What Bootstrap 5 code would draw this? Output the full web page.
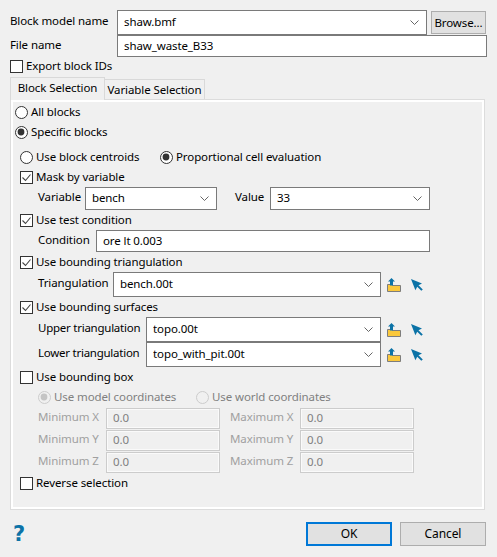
<!DOCTYPE html>
<html lang="en">
<head>
<meta charset="utf-8">
<title>Block selection</title>
<link href="https://cdn.jsdelivr.net/npm/bootstrap@5.3.0/dist/css/bootstrap.min.css" rel="stylesheet">
<style>
html,body{height:557px;overflow:hidden}
body{background:#f0f0f0;color:#000;font:11.5px/16px "Noto Sans","Liberation Sans",sans-serif;letter-spacing:-.1px}
.dlg{height:557px;padding:10px 10px 0 10px;display:flex;flex-direction:column}
.frow{display:flex;align-items:center}
label,.lbl{margin:0;white-space:nowrap;line-height:16px}
.frow>.lbl,.frow>label{padding-bottom:3px}
.form-control,.form-select{font-size:11.5px;letter-spacing:-.1px;line-height:16px;color:#000;background-color:#fff;border:1px solid #7a7a7a;border-radius:0;padding:0 0 2px 6px;box-shadow:none;min-height:0}
.form-select{background-image:url("data:image/svg+xml,%3Csvg xmlns='http://www.w3.org/2000/svg' viewBox='0 0 9 5'%3E%3Cpath d='M.5.5l4 4 4-4' fill='none' stroke='%23555' stroke-width='.9'/%3E%3C/svg%3E");background-size:9px 5px;background-position:right 7px center;background-repeat:no-repeat}
.form-control:disabled{background:#f0f0f0;border:1px solid #ccc;box-shadow:inset 0 0 0 1px #fafafa;color:#808080;opacity:1}
.form-check{margin:0;padding:0;min-height:0;display:flex;align-items:center;height:16px}
.form-check .form-check-input{float:none;margin:0 3px 0 0;width:13px;height:13px;border:1px solid #333;background-color:#fff;border-radius:0;box-shadow:none;flex:none}
.form-check .form-check-input[type=radio]{border-radius:50%;border-color:#333}
.form-check .form-check-input[type=checkbox]:checked{background-color:#fff;border-color:#333;background-size:11px 11px;background-image:url("data:image/svg+xml,%3Csvg xmlns='http://www.w3.org/2000/svg' viewBox='0 0 11 11'%3E%3Cpath d='M1.5 5.500l3 3 5-6' fill='none' stroke='%23444' stroke-width='1.1'/%3E%3C/svg%3E")}
.form-check .form-check-input[type=radio]:checked{background-color:#fff;border-color:#333;background-size:13px 13px;background-image:url("data:image/svg+xml,%3Csvg xmlns='http://www.w3.org/2000/svg' viewBox='0 0 13 13'%3E%3Ccircle cx='6' cy='6' r='3.4' fill='%23333'/%3E%3C/svg%3E")}
.form-check .form-check-input:disabled{opacity:1;border-color:#ccc;background-color:#f0f0f0}
.form-check .form-check-input[type=radio]:disabled:checked{border-color:#ccc;background-color:#f0f0f0;background-image:url("data:image/svg+xml,%3Csvg xmlns='http://www.w3.org/2000/svg' viewBox='0 0 13 13'%3E%3Ccircle cx='6' cy='6' r='3.4' fill='%23c4c4c4'/%3E%3C/svg%3E")}
.form-check-label{opacity:1!important;color:inherit}
.form-check-input:disabled~.form-check-label{color:#808080}
.frow>.off{color:#a0a0a0}
.btn-win{font-size:12px;line-height:16px;letter-spacing:-.1px;color:#000;background:#e1e1e1;border:1px solid #adadad;border-radius:0;padding:0}
.btn-win.dflt{border:2px solid #0078d7}
.top-combo{width:310px;height:25px}
.browse{width:55px;height:23px;margin-left:4px;font-size:11.5px}
.file-in{width:370px;height:22px}
.lb-top{width:107px}
.export{margin-top:1px}
.tabs{border:0;margin-top:3px;height:22px;padding:0;align-items:flex-end;position:relative;z-index:1;flex-wrap:nowrap}
.tabs .nav-link{font-size:11.5px;letter-spacing:-.1px;line-height:16px;color:#000;border-radius:0;margin:0;padding:2px 0 0;border:1px solid #d9d9d9;border-bottom:0;background:#f0f0f0;text-align:center;height:20px;white-space:nowrap}
.tabs .nav-link.active{background:#f0f0f0;color:#000;height:23px;width:95px;border-color:#d9d9d9;padding-top:2px;margin-bottom:-1px}
.tabs .tab2{width:100px;border-left:0}
.pane{width:475px;height:411px;border:1px solid #dcdcdc;box-shadow:inset 0 0 0 2px #fff;padding:2px 0 0 4px}
.ck-s{height:20px}
.indent{padding-left:5px}
.sub{padding-left:18px}
.mt5{margin-top:5px}
.h23{height:23px}
.w-lb-var{width:47px}
.var-sel{width:132px;height:23px}
.val-lb{margin-left:18px;width:35px}
.val-sel{width:160px;height:23px}
.cond-in{width:334px;height:22px}
.w-lb-cond{width:58px}
.w-lb-tri{width:75px}
.w-lb-ul{width:108px;letter-spacing:-.25px}
.tri-sel{width:268px;height:25px}
.ul-sel{width:235px;height:25px}
.ico{display:block;flex:none}
.ico1{margin-left:6px}
.ico2{margin-left:10px}
.nf{width:114px;height:21px}
.nfrow{height:22px}
.nf-lb{width:68px}
.nf-lb2{width:70px;margin-left:10px}
.rad1{width:140px}
.rad2{width:158px}
.foot{margin-top:12px;height:24px;justify-content:flex-end;position:relative;width:476px}
.help{position:absolute;left:3px;top:1px;color:#0c73a7;font:bold 21px/22px "DejaVu Sans",sans-serif}
.okb,.cnb{width:86px;height:24px}
.cnb{margin-left:8px}
</style>
</head>
<body>
<svg width="0" height="0" class="position-absolute">
  <symbol id="fold" viewBox="0 0 14 14"><path d="M.5 6.500h4l1 1h8v6H.5z" fill="#fac83c" stroke="#7d7d7d"/><path d="M4.500 0L1 3.500H3V7.500H6V3.500H8z" fill="#0c73a7"/></symbol>
  <symbol id="curs" viewBox="0 0 12 12"><path d="M0 0L11 4.500 7.500 6.300 11.800 10.500 10.300 11.800 6.200 7.700 4.400 11.200z" fill="#0c73a7"/></symbol>
</svg>
<div class="dlg">
  <div class="frow">
    <label class="lb-top" for="bm">Block model name</label>
    <select id="bm" class="form-select top-combo"><option>shaw.bmf</option></select>
    <button class="btn btn-win browse" type="button">Browse...</button>
  </div>
  <div class="frow">
    <label class="lb-top" for="fn">File name</label>
    <input id="fn" class="form-control file-in" value="shaw_waste_B33">
  </div>
  <div class="form-check export">
    <input class="form-check-input" type="checkbox" id="ex">
    <label class="form-check-label" for="ex">Export block IDs</label>
  </div>
  <ul class="nav nav-tabs tabs">
    <li class="nav-item"><a class="nav-link active" href="#">Block Selection</a></li>
    <li class="nav-item"><a class="nav-link tab2" href="#">Variable Selection</a></li>
  </ul>
  <div class="pane">
    <div class="d-flex flex-column">
      <div class="form-check ck-s"><input class="form-check-input" type="radio" name="a" id="r1"><label class="form-check-label" for="r1">All blocks</label></div>
      <div class="form-check ck-s"><input class="form-check-input" type="radio" name="a" id="r2" checked><label class="form-check-label" for="r2">Specific blocks</label></div>
      <div class="d-flex indent mt5 ck-s">
        <div class="form-check ck-s rad1"><input class="form-check-input" type="radio" name="b" id="r3"><label class="form-check-label" for="r3">Use block centroids</label></div>
        <div class="form-check ck-s"><input class="form-check-input" type="radio" name="b" id="r4" checked><label class="form-check-label" for="r4">Proportional cell evaluation</label></div>
      </div>
      <div class="indent">
        <div class="form-check ck-s"><input class="form-check-input" type="checkbox" id="c1" checked><label class="form-check-label" for="c1">Mask by variable</label></div>
        <div class="frow h23 sub">
          <span class="lbl w-lb-var">Variable</span>
          <select class="form-select var-sel"><option>bench</option></select>
          <span class="lbl val-lb">Value</span>
          <select class="form-select val-sel"><option>33</option></select>
        </div>
        <div class="form-check ck-s"><input class="form-check-input" type="checkbox" id="c2" checked><label class="form-check-label" for="c2">Use test condition</label></div>
        <div class="frow sub">
          <span class="lbl w-lb-cond">Condition</span>
          <input class="form-control cond-in" value="ore lt 0.003">
        </div>
        <div class="form-check ck-s"><input class="form-check-input" type="checkbox" id="c3" checked><label class="form-check-label" for="c3">Use bounding triangulation</label></div>
        <div class="frow sub">
          <span class="lbl w-lb-tri">Triangulation</span>
          <select class="form-select tri-sel"><option>bench.00t</option></select>
          <svg class="ico ico1" width="14" height="14"><use href="#fold"/></svg>
          <svg class="ico ico2" width="12" height="12"><use href="#curs"/></svg>
        </div>
        <div class="form-check ck-s"><input class="form-check-input" type="checkbox" id="c4" checked><label class="form-check-label" for="c4">Use bounding surfaces</label></div>
        <div class="frow sub">
          <span class="lbl w-lb-ul">Upper triangulation</span>
          <select class="form-select ul-sel"><option>topo.00t</option></select>
          <svg class="ico ico1" width="14" height="14"><use href="#fold"/></svg>
          <svg class="ico ico2" width="12" height="12"><use href="#curs"/></svg>
        </div>
        <div class="frow sub">
          <span class="lbl w-lb-ul">Lower triangulation</span>
          <select class="form-select ul-sel"><option>topo_with_pit.00t</option></select>
          <svg class="ico ico1" width="14" height="14"><use href="#fold"/></svg>
          <svg class="ico ico2" width="12" height="12"><use href="#curs"/></svg>
        </div>
        <div class="form-check ck-s"><input class="form-check-input" type="checkbox" id="c5"><label class="form-check-label" for="c5">Use bounding box</label></div>
        <div class="d-flex ck-s sub">
          <div class="form-check ck-s rad2"><input class="form-check-input" type="radio" name="c" id="r5" checked disabled><label class="form-check-label" for="r5">Use model coordinates</label></div>
          <div class="form-check ck-s"><input class="form-check-input" type="radio" name="c" id="r6" disabled><label class="form-check-label" for="r6">Use world coordinates</label></div>
        </div>
        <div class="frow sub nfrow"><span class="lbl nf-lb off">Minimum X</span><input class="form-control nf" value="0.0" disabled><span class="lbl nf-lb2 off">Maximum X</span><input class="form-control nf" value="0.0" disabled></div>
        <div class="frow sub nfrow"><span class="lbl nf-lb off">Minimum Y</span><input class="form-control nf" value="0.0" disabled><span class="lbl nf-lb2 off">Maximum Y</span><input class="form-control nf" value="0.0" disabled></div>
        <div class="frow sub nfrow"><span class="lbl nf-lb off">Minimum Z</span><input class="form-control nf" value="0.0" disabled><span class="lbl nf-lb2 off">Maximum Z</span><input class="form-control nf" value="0.0" disabled></div>
        <div class="form-check ck-s"><input class="form-check-input" type="checkbox" id="c6"><label class="form-check-label" for="c6">Reverse selection</label></div>
      </div>
    </div>
  </div>
  <div class="frow foot">
    <span class="help">?</span>
    <button class="btn btn-win dflt okb" type="button">OK</button>
    <button class="btn btn-win cnb" type="button">Cancel</button>
  </div>
</div>
</body>
</html>
